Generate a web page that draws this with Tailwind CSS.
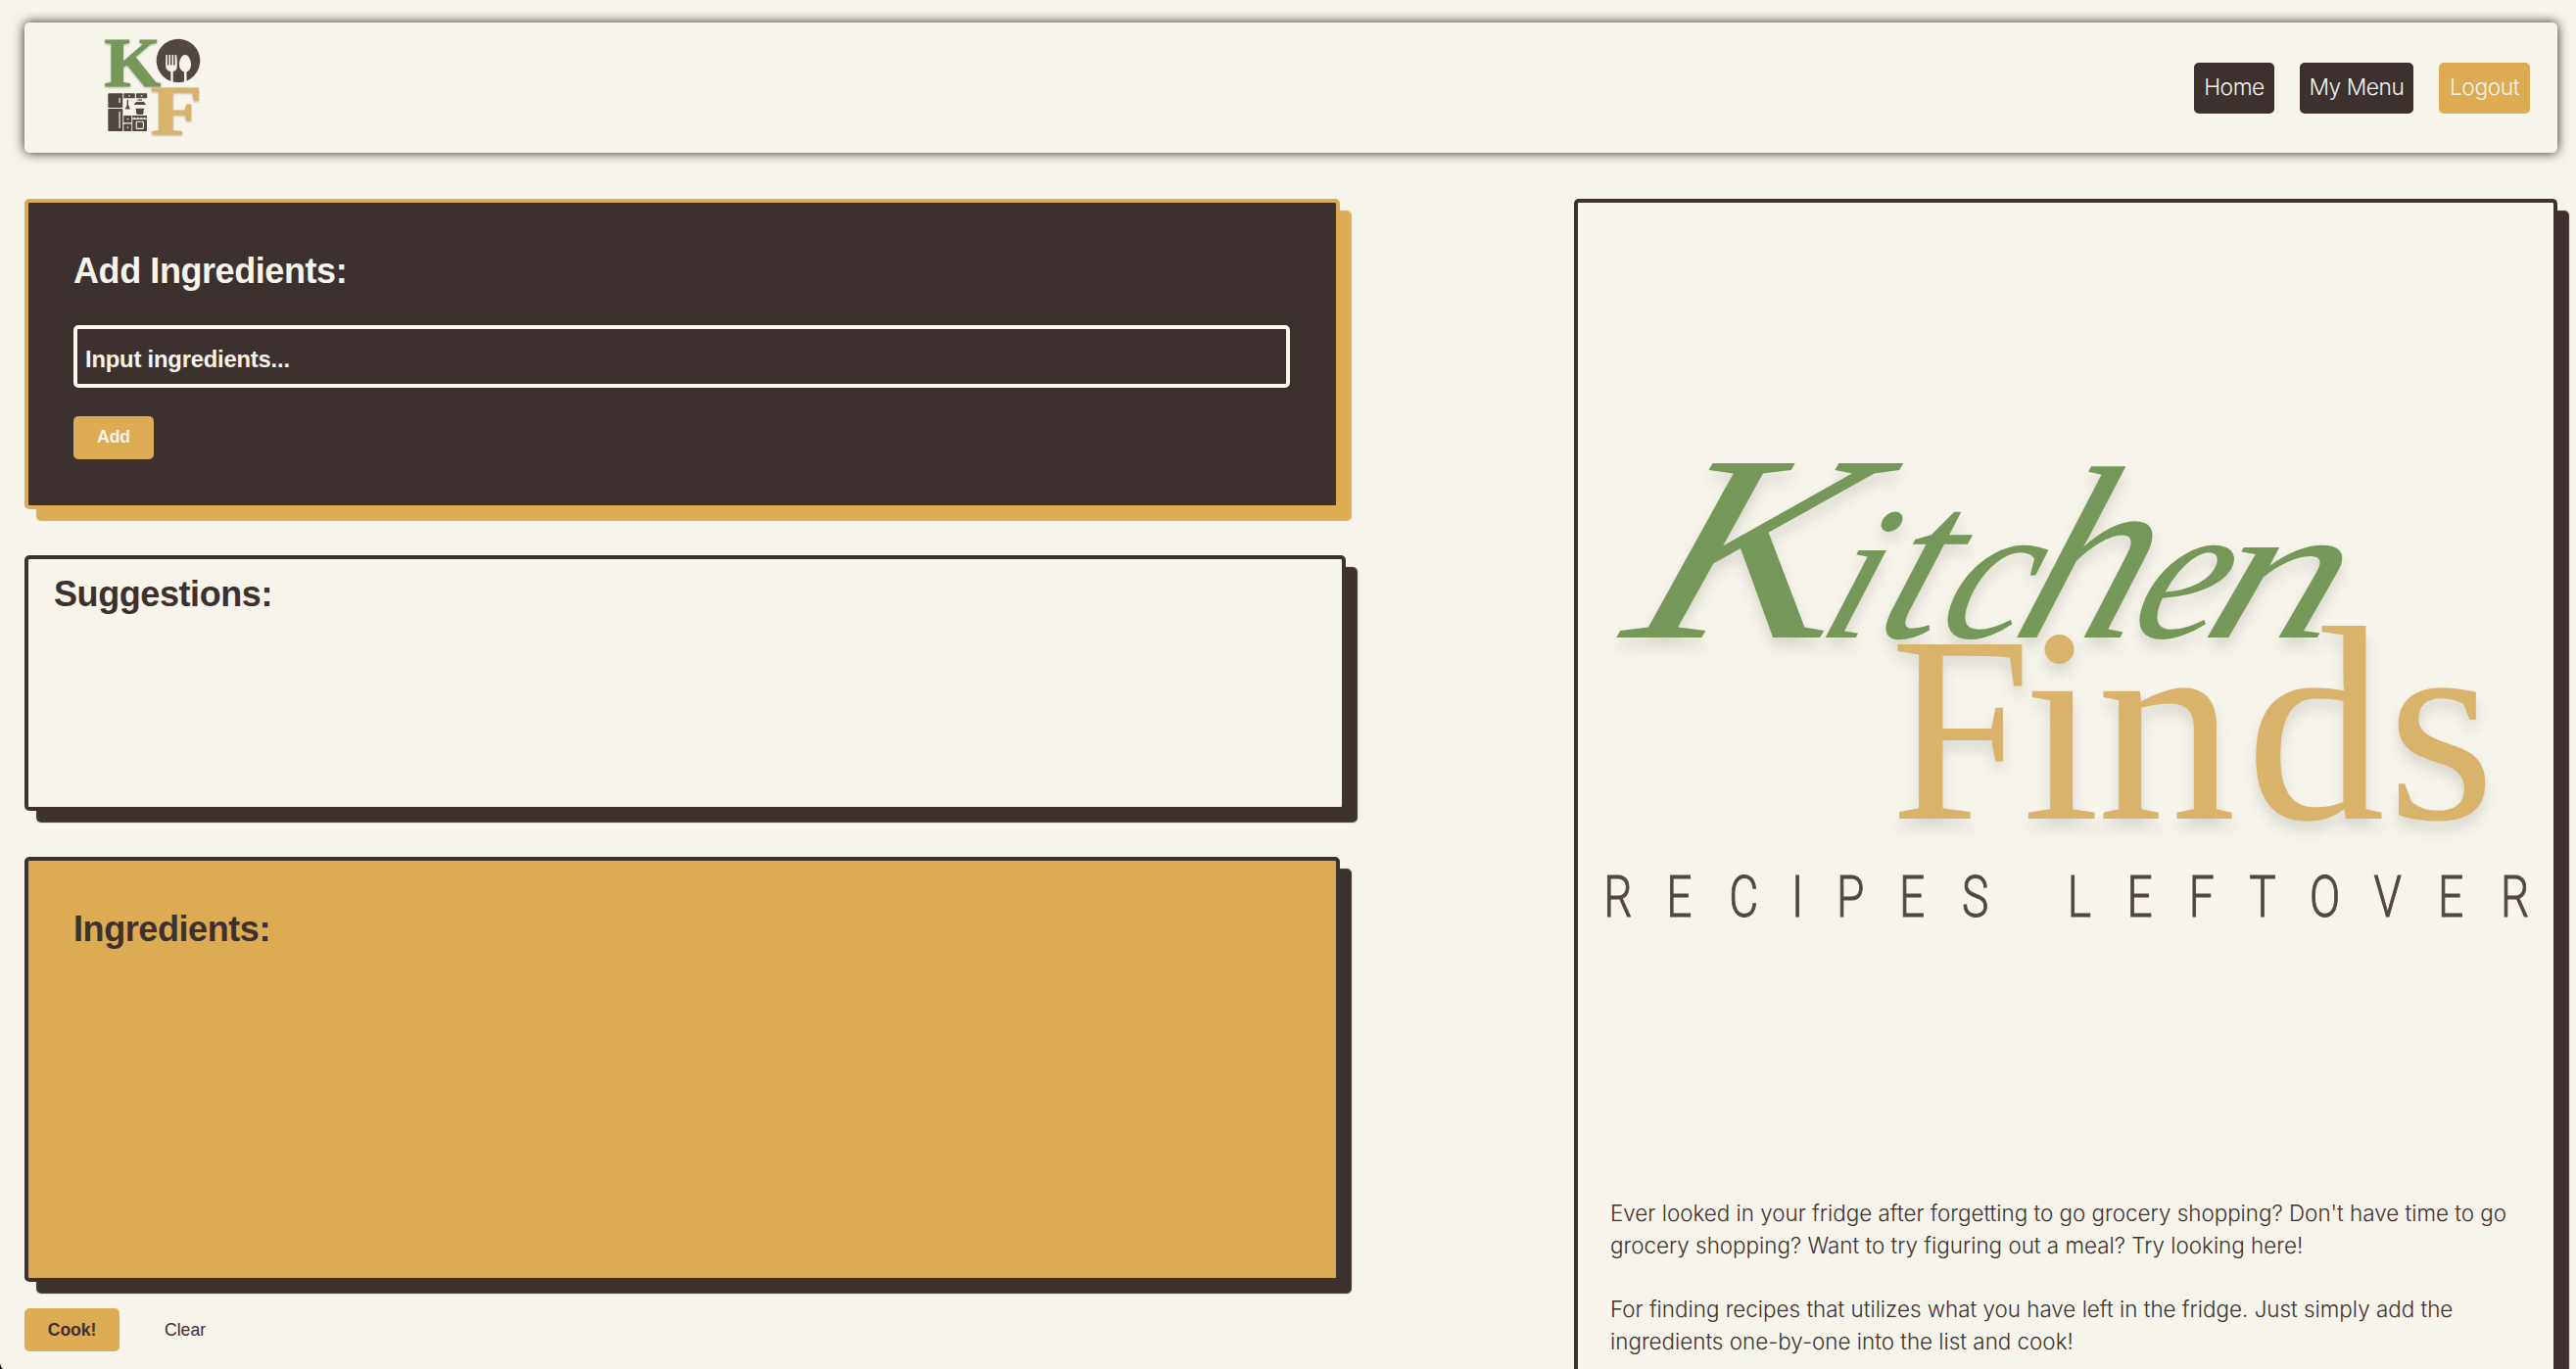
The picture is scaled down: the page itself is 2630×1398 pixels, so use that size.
<!DOCTYPE html>
<html lang="en">
<head>
<meta charset="utf-8">
<title>Kitchen Finds</title>
<script src="https://cdn.jsdelivr.net/npm/@tailwindcss/browser@4"></script>
</head>
<body class="relative h-[1398px] overflow-hidden bg-[#f7f4eb] font-['Liberation_Sans',Arial,sans-serif] text-[#3c312f]">
<div class="flex h-full flex-col overflow-hidden pt-[23px] pr-[19px] pl-[25px]">
  <header class="flex h-[133px] shrink-0 items-center justify-between rounded-[5px] pr-7 pl-[75px] shadow-[0_0_12px_rgba(0,0,0,0.85)]">
    <svg class="h-[113px] w-[113px] overflow-visible" viewBox="100 33 113 113">
      <g class="drop-shadow-[0_1px_1px_rgba(60,60,50,0.35)]" font-family="Liberation Serif" font-weight="bold" font-size="72" stroke-width="1">
        <text transform="translate(106.500 87.500) scale(1.030 1)" fill="#759859" stroke="#759859">K</text>
        <text transform="translate(154 137) scale(1.190 1)" fill="#d9b26b" stroke="#d9b26b">F</text>
      </g>
      <circle cx="182" cy="62" r="22.3" fill="#534741"/>
      <g fill="#f7f4eb">
        <path d="M169.300 56h1.600v10.500h1.500V56h1.600v10.500h1.500V56h1.600v10.500h1.500V56h1.600c.7 5.500.7 8.500.5 12.500-.1 2.500-1.500 3.800-4 4.800V84l-2.400-.6V73.300c-2.500-1-4.800-2.300-5-4.800-.2-4-.2-7 .1-12.500z"/>
        <path d="M189 56c3.500 0 6 5 6 10 0 4-2 6.500-4.500 7.500V83l-2.500.8V73.500c-2.800-1-5-3.500-5-7.500 0-5 2.500-10 6-10z"/>
      </g>
      <g fill="#534741">
        <rect x="110.300" y="95.300" width="15" height="14.700" rx="1"/>
        <rect x="110.300" y="111" width="15" height="23" rx="1"/>
        <rect x="126.300" y="95.300" width="11.500" height="5" rx=".6"/>
        <rect x="139" y="95.300" width="11.200" height="5" rx=".6"/>
        <path d="M129.600 102h1.400v5l1.800 4.500h-5l1.800-4.500zM140.500 101.500h4.500v1.300h-4.500zM139 104h8l2.200 3H136.700zM138.500 110.700h8.700v1.300h-.6v3q0 2-2 2h-3.600q-2 0-2-2v-3h-.5z"/>
        <rect x="126.300" y="118" width="8" height="7.300" rx=".6"/>
        <rect x="126.300" y="126.500" width="8" height="7.500" rx=".6"/>
        <path d="M135.200 118H150v2.700h-2v-1h-1.300v1h-2v-1h-1.300v1h-2v-1h-1.300v1h-2v-1h-1.300v1h-1.600zM135.200 122H150v12H135.200z"/>
      </g>
      <g fill="#f7f4eb">
        <path d="M121.500 100h1.200v5h-1.200zM121.500 114h1.200v17h-1.200zM131.200 97.200h1.600v1.200h-1.600zM143.800 97.200h1.600v1.200h-1.600zM129.600 121h1.500v1.200h-1.500zM129.600 129.500h1.500v1.200h-1.500z"/>
        <rect x="139.200" y="124.200" width="7.200" height="7.200" rx=".8" fill="none" stroke="#f7f4eb" stroke-width="1.100"/>
      </g>
    </svg>
    <nav class="flex gap-[26px] font-['Inter',sans-serif] text-[22.800px] leading-[50px] font-light tracking-[-0.450px] text-[#f7f4eb]">
      <a class="h-[52px] w-[82px] rounded-[5px] bg-[#3c312f] text-center">Home</a>
      <a class="h-[52px] w-[116px] rounded-[5px] bg-[#3c312f] text-center">My Menu</a>
      <a class="h-[52px] w-[93px] rounded-[5px] bg-[#ddab53] text-center">Logout</a>
    </nav>
  </header>
  <main class="mt-[47px] flex min-h-0 flex-1 justify-between">
    <div class="flex flex-col">
      <section class="h-[317px] w-[1343px] rounded-[5px] border-4 border-[#ddab53] bg-[#3c312f] px-[46px] pt-12 text-[#f7f4eb] shadow-[12px_12px_1px_#ddab53]">
        <h2 class="text-[36px] leading-[44px] font-bold tracking-[-0.420px]">Add Ingredients:</h2>
        <input class="mt-[33px] block h-16 w-[1242px] rounded-[5px] border-4 border-[#fffaf0] px-2 pt-1.5 text-[23.800px] font-bold tracking-[-0.200px] placeholder:text-[#f7f4eb]" placeholder="Input ingredients...">
        <button class="mt-[29px] h-11 w-[82px] rounded-[5px] bg-[#ddab53] pb-0.5 text-[17.700px] font-bold tracking-[-0.200px]">Add</button>
      </section>
      <section class="mt-[47px] h-[261px] w-[1349px] shrink-0 rounded-[5px] border-4 border-[#3c312f] bg-[#f7f4eb] px-[26px] pt-[14px] shadow-[12px_12px_1px_#3c312f]">
        <h2 class="text-[36px] leading-[44px] font-bold tracking-[-0.420px]">Suggestions:</h2>
      </section>
      <section class="mt-[47px] h-[434px] w-[1343px] shrink-0 rounded-[5px] border-4 border-[#3c312f] bg-[#ddab53] px-[46px] pt-[48px] shadow-[12px_12px_1px_#3c312f]">
        <h2 class="text-[36px] leading-[44px] font-bold tracking-[-0.420px]">Ingredients:</h2>
      </section>
      <div class="mt-[27px] flex gap-[22px] text-[17.600px]">
        <button class="h-11 w-[97px] rounded-[5px] bg-[#ddab53] font-bold tracking-[-0.100px]">Cook!</button>
        <button class="h-11 px-6">Clear</button>
      </div>
    </div>
    <aside class="w-[1004px] rounded-t-[5px] border-4 border-b-0 border-[#3c312f] shadow-[12px_12px_1px_#3c312f]">
      <svg class="block h-[1016px] w-[996px]" viewBox="1611 207 996 1016">
        <g class="drop-shadow-[0_10px_7px_rgba(60,70,60,0.16)]" font-family="Liberation Serif" font-style="italic" fill="#759859">
          <text transform="translate(1654 651) skewX(-19) scale(1.180 1)" font-size="272">K</text>
          <g transform="translate(0 651) skewX(-19)" font-size="200">
            <text x="1853" y="0" font-size="194">i</text>
            <text x="1910" y="0" font-size="228">t</text>
            <text x="1974" y="0">c</text>
            <text x="2050" y="0" font-size="252">h</text>
            <text x="2170" y="0">e</text>
            <text x="2244" y="0" textLength="134" lengthAdjust="spacingAndGlyphs">n</text>
          </g>
        </g>
        <g class="drop-shadow-[0_10px_7px_rgba(60,70,60,0.16)]" font-family="Liberation Serif" font-size="284" fill="#d9b26b">
          <text transform="translate(1930 836) scale(.950 1)" font-size="272">F</text>
          <text x="2065 2141 2293 2437" y="836">inds</text>
        </g>
        <text transform="translate(0 936) scale(.780 1)" font-family="Roboto" font-weight="300" font-size="59" fill="#534741" stroke="#534741" stroke-width="1" x="2099 2181 2263 2345 2404 2486 2568 2635 2706 2784 2865 2944 3023 3107 3191 3273" y="0">RECIPES LEFTOVER</text>
      </svg>
      <div class="pl-[33px] font-['Inter',sans-serif] text-[22.400px] leading-[32.700px] font-light whitespace-nowrap">
        <p>Ever looked in your fridge after forgetting to go grocery shopping? Don't have time to go<br>grocery shopping? Want to try figuring out a meal? Try looking here!</p>
        <p class="mt-[32.700px]">For finding recipes that utilizes what you have left in the fridge. Just simply add the<br>ingredients one-by-one into the list and cook!</p>
      </div>
    </aside>
  </main>
</div>
<svg class="absolute bottom-0 left-0 h-[6px] w-[3px]" viewBox="0 0 3 6"><path d="M0 0Q.5 4 3 6H0z" fill="#000"/></svg>
</body>
</html>
